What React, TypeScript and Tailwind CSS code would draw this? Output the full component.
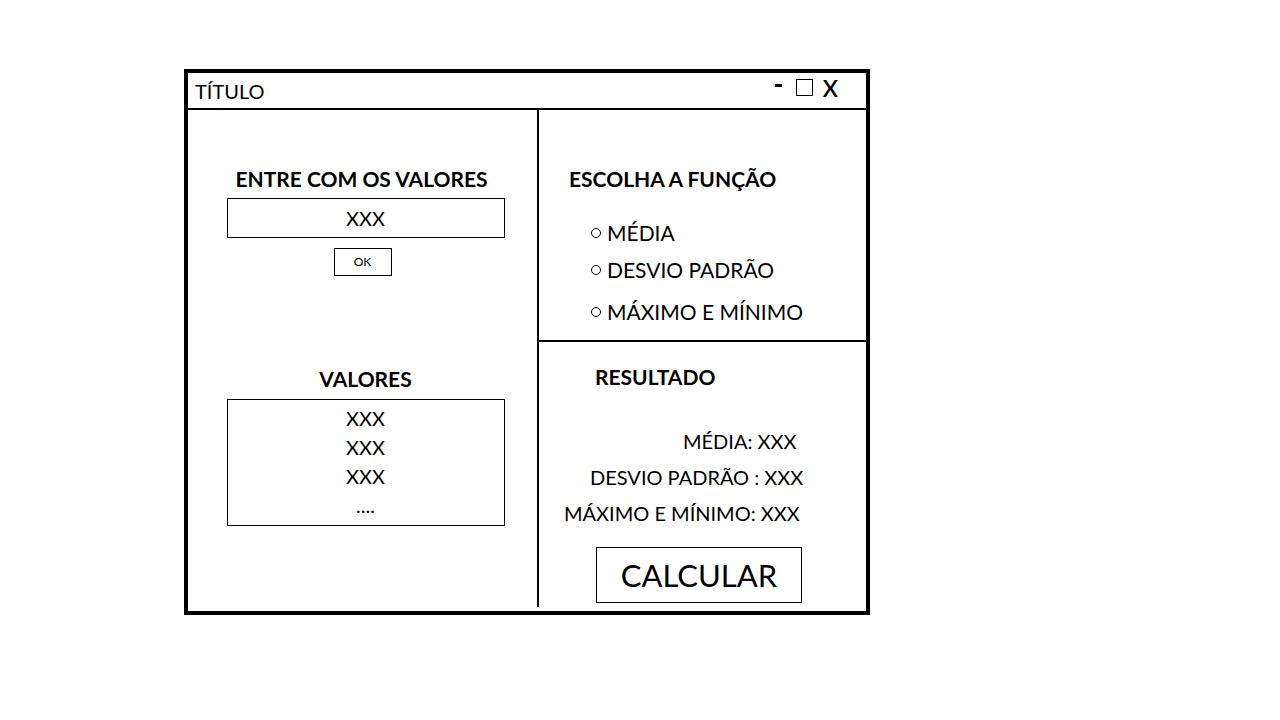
import React from 'react';

function Radio({ label }: { label: string }) {
  return (
    <div className="flex items-center gap-[6px] h-[28px] text-[21px] leading-[28px]">
      <span className="w-[10px] h-[10px] rounded-full border border-black" />
      <span>{label}</span>
    </div>
  );
}

export default function App() {
  return (
    <div className="w-[1280px] h-[720px] bg-white pl-[184px] pt-[69px] text-black font-['Lato',sans-serif]">
      <div className="w-[686px] h-[546px] border-4 border-black flex flex-col">
        {/* title bar */}
        <div className="h-[37px] border-b-2 border-black flex items-center justify-between pl-[7px] pr-[28px]">
          <span className="text-[20px] leading-6 mt-[1px]">TÍTULO</span>
          <div className="flex items-center -mt-[6px]">
            <span className="w-[7px] h-[3px] bg-black -mt-[5px]" />
            <span className="ml-[14px] w-[17px] h-[17px] border-[1.5px] border-black" />
            <span className="ml-[10px] text-[23px] leading-6 font-semibold">X</span>
          </div>
        </div>

        {/* body */}
        <div className="flex-1 flex">
          {/* left column */}
          <div className="w-[349px] flex flex-col items-center pt-[57px]">
            <h2 className="text-[21px] leading-6 font-bold -ml-[2px]">ENTRE COM OS VALORES</h2>
            <div className="ml-[6px] mt-[7px] w-[278px] h-[40px] border border-black flex items-center justify-center text-[20px]">
              XXX
            </div>
            <button className="mt-[10px] w-[58px] h-[28px] border border-black text-[12px] flex items-center justify-center">
              OK
            </button>
            <h2 className="ml-[6px] mt-[91px] text-[21px] leading-6 font-bold">VALORES</h2>
            <div className="ml-[6px] mt-[8px] w-[278px] h-[127px] border border-black flex flex-col items-center pt-[4px] text-[20px] leading-[29px]">
              <span>XXX</span>
              <span>XXX</span>
              <span>XXX</span>
              <span>....</span>
            </div>
          </div>

          <div className="w-[2px] bg-black mb-[4px]" />

          {/* right column */}
          <div className="flex-1 flex flex-col">
            <div className="h-[232px] border-b-2 border-black pl-[30px] pt-[57px]">
              <h2 className="text-[21px] leading-6 font-bold">ESCOLHA A FUNÇÃO</h2>
              <div className="pl-[22px] mt-[28px] flex flex-col">
                <Radio label="MÉDIA" />
                <div className="mt-[9px]"><Radio label="DESVIO PADRÃO" /></div>
                <div className="mt-[14px]"><Radio label="MÁXIMO E MÍNIMO" /></div>
              </div>
            </div>
            <div className="flex-1 flex flex-col pt-[23px] text-[20px] leading-[28px]">
              <h2 className="pl-[56px] text-[21px] leading-6 font-bold">RESULTADO</h2>
              <div className="pl-[144px] mt-[38px]">MÉDIA: XXX</div>
              <div className="pl-[51px] mt-[8px]">DESVIO PADRÃO : XXX</div>
              <div className="pl-[25px] mt-[8px]">MÁXIMO E MÍNIMO: XXX</div>
              <button className="ml-[57px] mt-[20px] w-[206px] h-[56px] border border-black text-[31px] leading-none flex items-center justify-center">
                CALCULAR
              </button>
            </div>
          </div>
        </div>
      </div>
    </div>
  );
}
